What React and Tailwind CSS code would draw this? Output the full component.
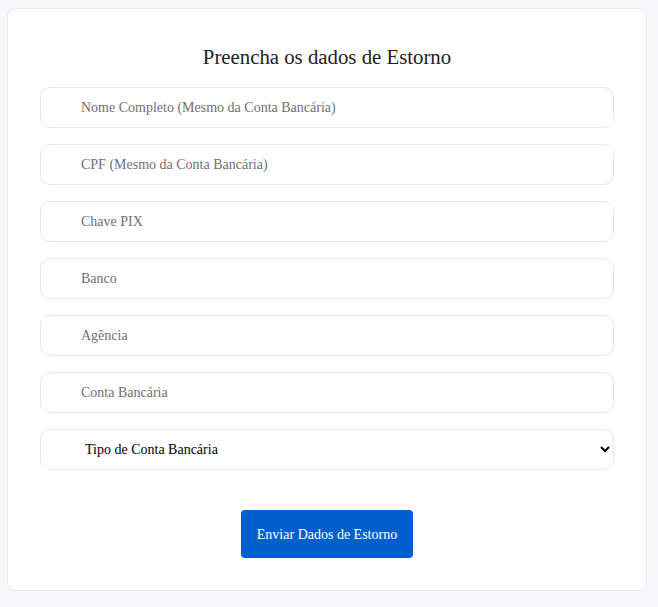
import React from "react";

export default function App() {
  const fields = [
    "Nome Completo (Mesmo da Conta Bancária)",
    "CPF (Mesmo da Conta Bancária)",
    "Chave PIX",
    "Banco",
    "Agência",
    "Conta Bancária",
  ];
  return (
    <div className="min-h-[607px] bg-[#f7f7f9] pt-[8px] pl-[7px]" style={{ fontFamily: '"Liberation Serif", serif' }}>
      <div className="w-[640px] h-[583px] bg-white border border-[#e6e8f1] rounded-[8px] px-[32px] pt-[36px]">
        <h2 className="text-center text-[20.8px] leading-[24px] text-[#222] mb-[18px]">Preencha os dados de Estorno</h2>
        <div className="flex flex-col gap-[16px]">
          {fields.map((f) => (
            <input
              key={f}
              placeholder={f}
              className="h-[41px] w-full rounded-[10px] border border-[#e6e8f1] bg-white pl-[40px] text-[14px] outline-none placeholder:text-[#707070]"
            />
          ))}
          <select
            defaultValue=""
            className="h-[41px] w-full rounded-[10px] border border-[#e6e8f1] bg-white pl-[40px] pr-[6px] text-[14px] text-black outline-none"
          >
            <option value="">Tipo de Conta Bancária</option>
            <option value="cc">Conta Corrente</option>
            <option value="cp">Conta Poupança</option>
          </select>
        </div>
        <div className="flex justify-center mt-[40px]">
          <button className="w-[172px] h-[48px] rounded-[4px] bg-[#005fcc] text-white text-[14px]">
            Enviar Dados de Estorno
          </button>
        </div>
      </div>
    </div>
  );
}
